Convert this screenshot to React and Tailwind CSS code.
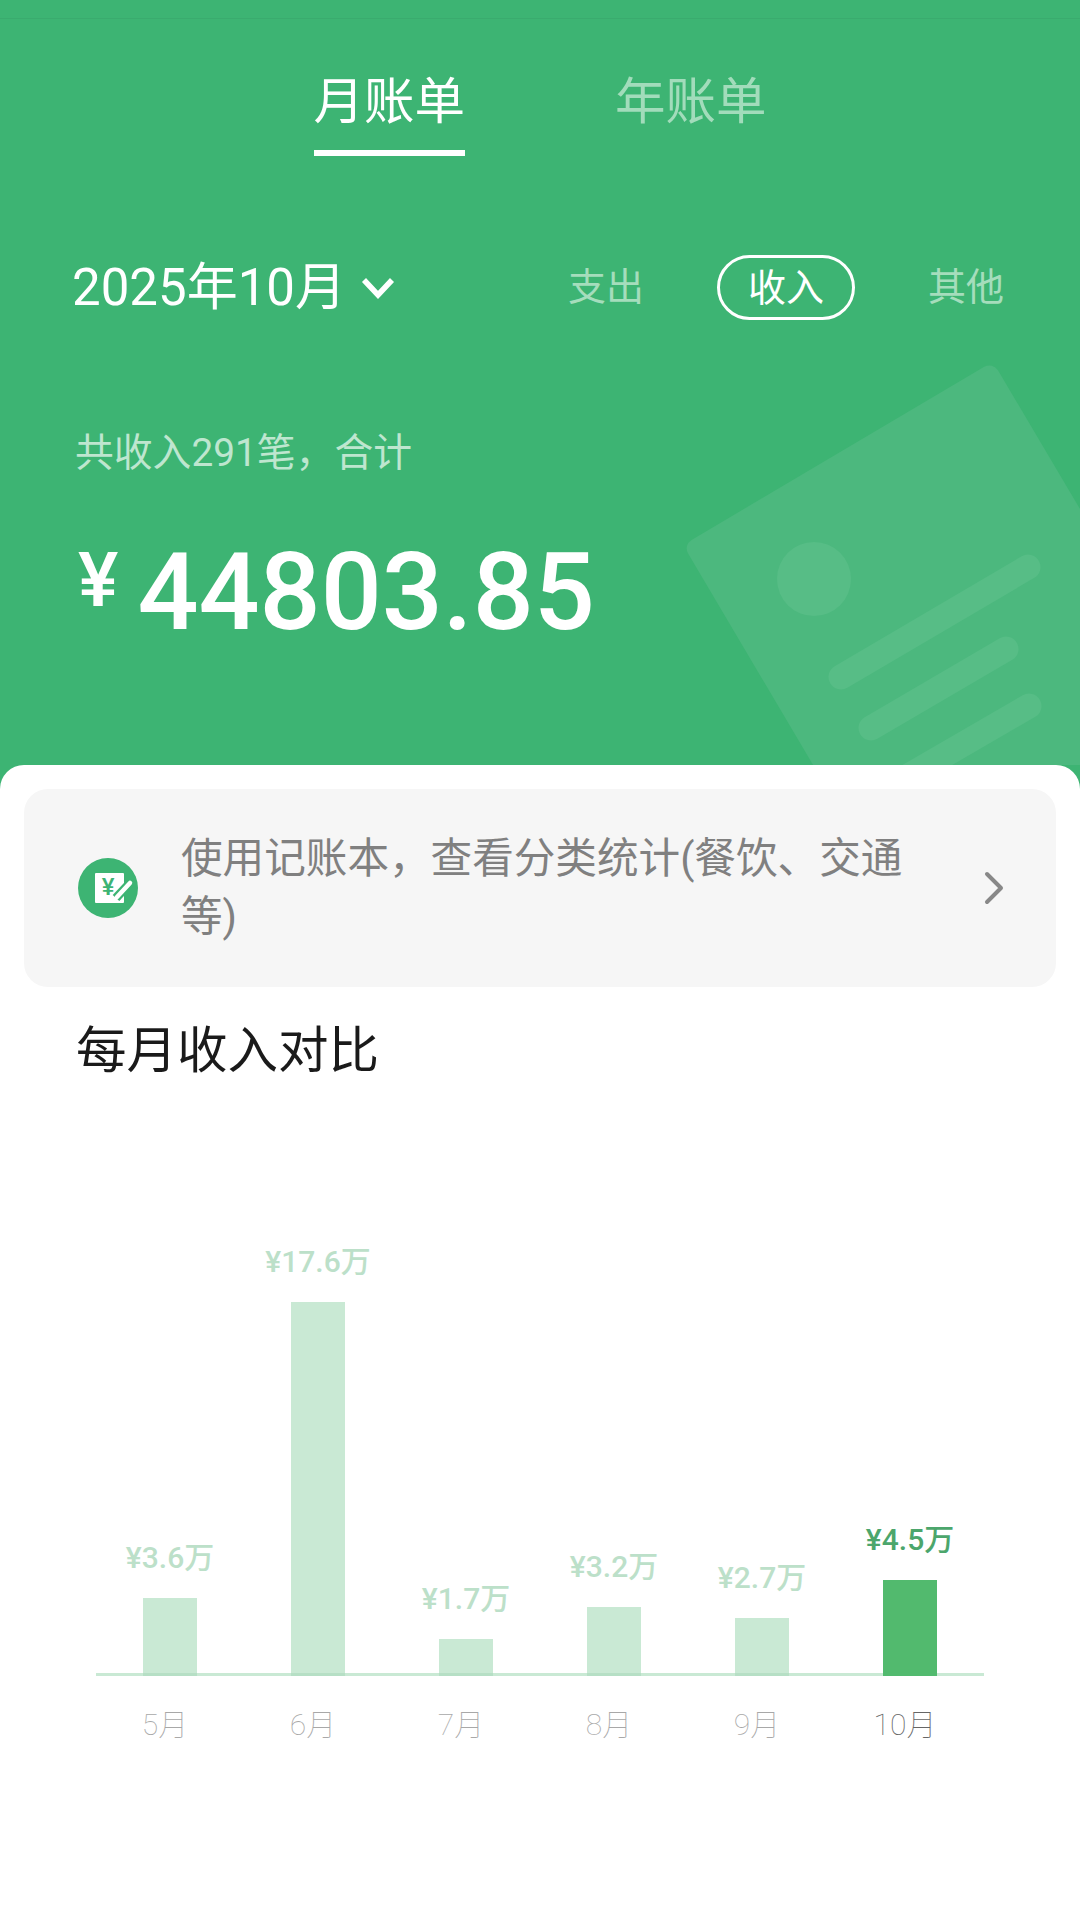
const months = [
  { label: '¥3.6万', month: '5月', height: 78 },
  { label: '¥17.6万', month: '6月', height: 374 },
  { label: '¥1.7万', month: '7月', height: 37 },
  { label: '¥3.2万', month: '8月', height: 69 },
  { label: '¥2.7万', month: '9月', height: 58 },
  { label: '¥4.5万', month: '10月', height: 96, active: true },
];

function Watermark() {
  return (
    <svg className="absolute left-0 top-0" width="1080" height="765" viewBox="0 0 1080 765" fill="none">
      <rect x="683" y="545" width="360" height="600" rx="10" fill="#4CB87E" transform="rotate(-30.6 683 545)" />
      <circle cx="814" cy="579" r="37" fill="#57BD86" />
      <g stroke="#57BD86" strokeWidth="25" strokeLinecap="round">
        <path d="M841 677 1028 567" />
        <path d="M871 728 1006 649" />
        <path d="M898 782 1029 706" />
      </g>
    </svg>
  );
}

function LedgerIcon() {
  return (
    <svg width="60" height="60" viewBox="0 0 60 60" className="shrink-0">
      <circle cx="30" cy="30" r="30" fill="#3DB473" />
      <rect x="17" y="15" width="29" height="30" rx="1" fill="#fff" />
      <text x="30" y="37" textAnchor="middle" fontSize="24" fontWeight="500" fontFamily="Roboto" fill="#3DB473">¥</text>
      <path d="M38 40 52 25" stroke="#3DB473" strokeWidth="9" />
      <path d="M39 39 52 25" stroke="#fff" strokeWidth="4.5" strokeLinecap="round" />
      <path d="M35 44l1.500-5 3.500 3.500z" fill="#fff" />
    </svg>
  );
}

export default function App() {
  return (
    <div className="flex min-h-[1920px] w-[1080px] flex-col bg-[#3DB473] font-['Roboto','Noto_Sans_CJK_SC',sans-serif]">
      <header className="relative h-[765px] shrink-0 overflow-hidden">
        <Watermark />
        <div className="relative flex h-full flex-col">
          <div className="h-[19px] border-b border-[#3AAB6E]" />
          <nav className="mt-[49px] flex justify-center gap-[150px] text-[50.5px] leading-[68px]">
            <div className="h-[88px] border-b-[6px] border-white text-white">月账单</div>
            <div className="text-[#A2DCBB]">年账单</div>
          </nav>
          <div className="mt-[99px] flex items-center justify-between pl-[72px] pr-[76px]">
            <div className="flex items-center gap-[15px] text-[51px] leading-[65px] text-white">
              <span>2025年10月</span>
              <svg width="34" height="22" viewBox="0 0 34 22" fill="none">
                <path d="M3 3l14 15L31 3" stroke="#fff" strokeWidth="5.500" />
              </svg>
            </div>
            <div className="flex items-center gap-[73px] text-[38px] text-[#A5DDBC]">
              <span>支出</span>
              <span className="flex h-[65px] items-center rounded-[33px] border-[3px] border-white px-[28px] pt-[1px] text-white">收入</span>
              <span>其他</span>
            </div>
          </div>
          <div className="mt-[106px] pl-[75px] text-[38.8px] leading-[54px] text-[#BEE6CF]">共收入291笔，合计</div>
          <div className="mt-[49px] flex items-start pl-[78px] text-white">
            <span className="mt-[9px] text-[76px] font-medium leading-[84px]">¥</span>
            <span className="ml-[19px] text-[107.500px] font-medium leading-[126px]">44803.85</span>
          </div>
        </div>
      </header>

      <main className="flex-1 rounded-t-[24px] bg-white px-[24px] pt-[24px]">
        <div className="flex h-[198px] items-center rounded-[24px] bg-[#F6F6F6] pl-[54px]">
          <LedgerIcon />
          <p className="ml-[43px] w-[745px] text-[41.6px] leading-[58px] text-[#808080]">
            使用记账本，查看分类统计(餐饮、交通等)
          </p>
          <svg className="ml-[57px]" width="22" height="36" viewBox="0 0 22 36" fill="none">
            <path d="M4 4l14 14L4 32" stroke="#888888" strokeWidth="4" strokeLinecap="round" strokeLinejoin="round" />
          </svg>
        </div>

        <h2 className="ml-[52px] mt-[30px] text-[50.5px] font-normal leading-[68px] text-[#1A1A1A]">每月收入对比</h2>

        <div className="ml-[72px] mt-[157px] w-[888px]">
          <div className="flex items-end border-b-[3px] border-[#C9E9D4]">
            {months.map((m) => (
              <div key={m.month} className="flex w-[148px] flex-col items-center">
                <span
                  className={
                    m.active
                      ? 'mb-[20px] text-[30px] font-medium leading-[40px] text-[#4CA66C]'
                      : 'mb-[20px] text-[30px] font-medium leading-[40px] text-[#BCE0C9]'
                  }
                >
                  {m.label}
                </span>
                <div
                  className={m.active ? 'mb-[-3px] w-[54px] bg-[#52BA6E]' : 'mb-[-3px] w-[54px] border-b-[3px] border-[#B6DFC5] bg-[#C9E9D4]'}
                  style={{ height: m.height }}
                />
              </div>
            ))}
          </div>
          <div className="mt-[29px] flex">
            {months.map((m) => (
              <span
                key={m.month}
                className={
                  m.active
                    ? 'w-[148px] pr-[10px] text-center text-[30px] font-thin leading-[40px] text-[#666666]'
                    : 'w-[148px] pr-[10px] text-center text-[30px] font-thin leading-[40px] text-[#A8A8A8]'
                }
              >
                {m.month}
              </span>
            ))}
          </div>
        </div>
      </main>
    </div>
  );
}
